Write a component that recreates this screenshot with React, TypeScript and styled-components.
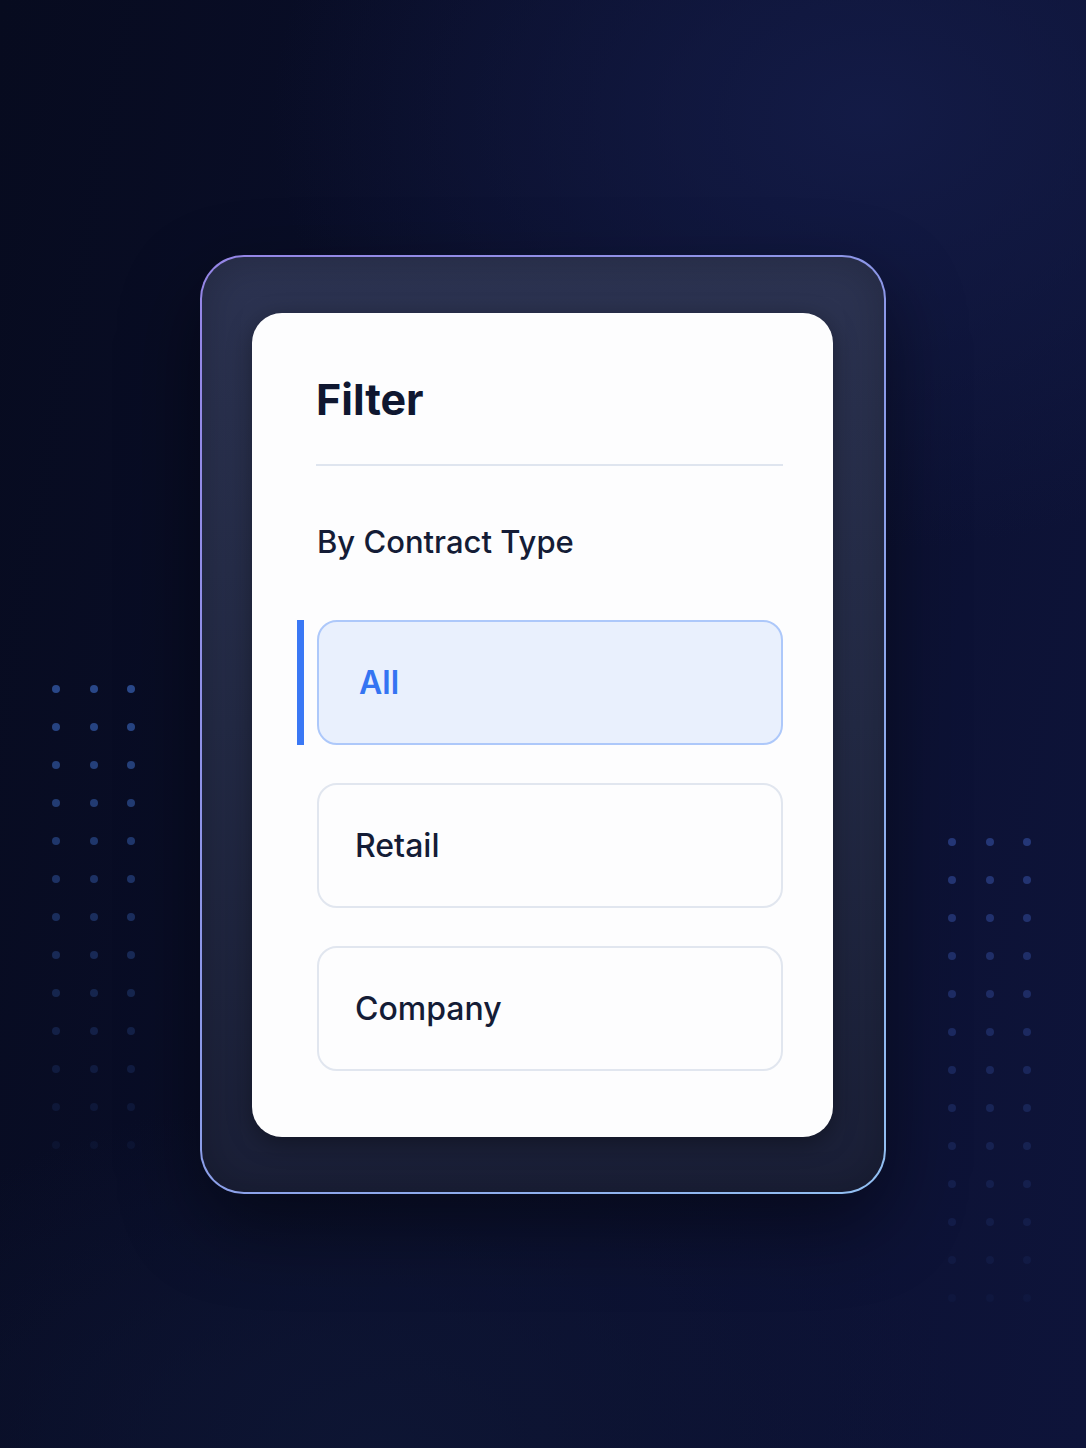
import styled, { createGlobalStyle } from 'styled-components';

const GlobalStyle = createGlobalStyle`
  * {
    box-sizing: border-box;
  }

  body {
    margin: 0;
    font-family: 'Inter', 'Noto Sans', sans-serif;
    background: #0a0f26;
  }
`;

const options = ['All', 'Retail', 'Company'];

function DotGrid({ top, left, tint }: { top: number; left: number; tint: string }) {
  const rows = 13;
  return (
    <Dots $top={top} $left={left}>
      {Array.from({ length: rows * 3 }).map((_, i) => {
        const row = Math.floor(i / 3);
        return <Dot key={i} $tint={tint} style={{ opacity: 0.95 - (row / rows) * 0.9 }} />;
      })}
    </Dots>
  );
}

function App() {
  return (
    <Page>
      <GlobalStyle />
      <DotGrid top={685} left={52} tint='#2b4b8e' />
      <DotGrid top={838} left={948} tint='#26397a' />
      <Frame>
        <Card>
          <Title>Filter</Title>
          <Divider />
          <Section>By Contract Type</Section>
          <OptionList>
            {options.map((label, i) => (
              <Option key={label} $active={i === 0}>
                {label}
              </Option>
            ))}
          </OptionList>
        </Card>
      </Frame>
    </Page>
  );
}

const Page = styled.div`
  position: relative;
  width: 1086px;
  height: 1448px;
  display: flex;
  align-items: center;
  justify-content: center;
  overflow: hidden;
  background:
    radial-gradient(ellipse 55% 30% at 80% 8%, rgba(20, 28, 72, 0.9) 0%, transparent 100%),
    radial-gradient(ellipse 55% 25% at 35% 100%, rgba(14, 22, 52, 0.9) 0%, transparent 100%),
    linear-gradient(100deg, #070b1f 0%, #0b1030 60%, #0e143a 100%);
`;

const Dots = styled.div<{ $top: number; $left: number }>`
  position: absolute;
  top: ${(p) => p.$top}px;
  left: ${(p) => p.$left}px;
  display: grid;
  grid-template-columns: repeat(3, 8px);
  column-gap: 29.5px;
  row-gap: 30px;
`;

const Dot = styled.span<{ $tint: string }>`
  width: 8px;
  height: 8px;
  border-radius: 50%;
  background: ${(p) => p.$tint};
`;

const Frame = styled.div`
  width: 686px;
  height: 939px;
  padding: 56px 51px 55px 50px;
  border-radius: 44px;
  border: 2px solid transparent;
  background:
    linear-gradient(180deg, #2c3351 0%, #232a45 50%, #1a1f37 100%) padding-box,
    linear-gradient(135deg, #9585e6 0%, #8b9ae8 50%, #92c0f2 100%) border-box;
  box-shadow: 0 30px 80px rgba(0, 0, 0, 0.45), inset 0 0 40px rgba(0, 0, 0, 0.2);
`;

const Card = styled.div`
  width: 100%;
  height: 100%;
  background: #fdfdfe;
  border-radius: 30px;
  padding: 60px 50px 0 64px;
  box-shadow: 0 6px 24px rgba(0, 0, 0, 0.35);
`;

const Title = styled.h1`
  margin: 0;
  font-size: 43px;
  line-height: 53px;
  font-weight: 700;
  color: #0f1730;
`;

const Divider = styled.div`
  height: 2px;
  margin-top: 38px;
  background: #dfe5ef;
`;

const Section = styled.h2`
  margin: 58px 0 0 1px;
  font-size: 31px;
  line-height: 36px;
  font-weight: 500;
  color: #141c36;
`;

const OptionList = styled.div`
  margin-top: 60px;
  display: flex;
  flex-direction: column;
  gap: 38px;
  padding-left: 1px;
`;

const Option = styled.div<{ $active?: boolean }>`
  position: relative;
  height: 125px;
  display: flex;
  align-items: center;
  padding-left: ${(p) => (p.$active ? '40px' : '36px')};
  border-radius: 20px;
  border: 2px solid ${(p) => (p.$active ? '#adc8fa' : '#e1e6ef')};
  background: ${(p) => (p.$active ? '#e9f0fd' : '#fdfdfe')};
  font-size: 32px;
  font-weight: ${(p) => (p.$active ? 600 : 500)};
  color: ${(p) => (p.$active ? '#3474f2' : '#141c36')};

  &::before {
    content: '';
    display: ${(p) => (p.$active ? 'block' : 'none')};
    position: absolute;
    left: -22px;
    top: -2px;
    bottom: -2px;
    width: 7px;
    background: #3a78f5;
  }
`;

export default App;
